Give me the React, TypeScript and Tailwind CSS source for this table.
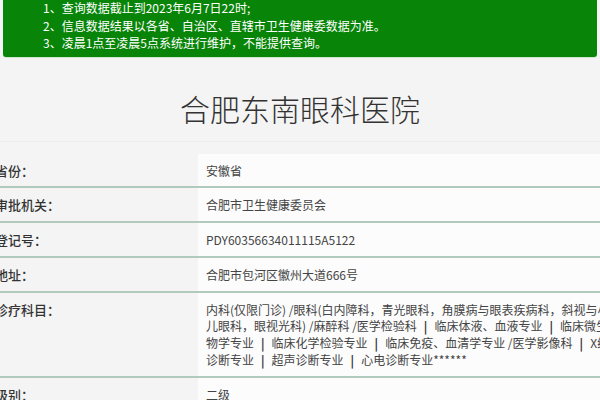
import React from "react";

const SEP = "§";

const rows: { label: string; value: string[] }[] = [
  { label: "省份：", value: ["安徽省"] },
  { label: "审批机关：", value: ["合肥市卫生健康委员会"] },
  { label: "登记号：", value: ["PDY60356634011115A5122"] },
  { label: "地址：", value: ["合肥市包河区徽州大道666号"] },
  {
    label: "诊疗科目：",
    value: [
      "内科(仅限门诊) /眼科(白内障科，青光眼科，角膜病与眼表疾病科，斜视与小",
      "儿眼科，眼视光科) /麻醉科 /医学检验科§临床体液、血液专业§临床微生",
      "物学专业§临床化学检验专业§临床免疫、血清学专业 /医学影像科§X线",
      "诊断专业§超声诊断专业§心电诊断专业******",
    ],
  },
  { label: "级别：", value: ["二级"] },
];

function Line({ text }: { text: string }) {
  const parts = text.split(SEP);
  return (
    <div className="whitespace-nowrap">
      {parts.map((p, i) => (
        <React.Fragment key={i}>
          {i > 0 && (
            <span className="mx-[7px] font-bold text-[#333]">|</span>
          )}
          {p}
        </React.Fragment>
      ))}
    </div>
  );
}

export default function App() {
  return (
    <div
      className="w-[600px] h-[400px] overflow-hidden bg-[#f4f4f4] text-[#333]"
      style={{ fontFamily: '"Noto Sans CJK SC", "Noto Sans", sans-serif' }}
    >
      <div className="px-[3px]">
        <div className="mt-[-1px] rounded-b-[3px] bg-[#088408] pl-[40px] pb-[5px] text-[12px] leading-[17.5px] text-white shadow-[0_1px_0_#cfe6cf]">
          <p>1、查询数据截止到2023年6月7日22时;</p>
          <p>2、信息数据结果以各省、自治区、直辖市卫生健康委数据为准。</p>
          <p>3、凌晨1点至凌晨5点系统进行维护，不能提供查询。</p>
        </div>
      </div>

      <div className="h-[85px] border-b border-[#ececec] pt-[36px] text-center">
        <h1 className="text-[30px] font-light leading-[30px] text-[#333]">
          合肥东南眼科医院
        </h1>
      </div>

      <div className="ml-[-5px] mt-[12px] w-[640px]">
        {rows.map((r, i) => (
          <div
            key={i}
            className="flex border-b-2 border-[#b2cabe] last:border-b-0"
          >
            <div className="w-[203px] shrink-0 pt-[9px] text-[13px] font-medium leading-[16.75px] text-[#333]">
              {r.label}
            </div>
            <div className="flex-1 bg-[#fcfcfc] pl-[8px] pt-[9px] pb-[7px] text-[12px] leading-[16.75px] text-[#444]">
              {r.value.map((line, j) => (
                <Line key={j} text={line} />
              ))}
            </div>
          </div>
        ))}
      </div>
    </div>
  );
}
